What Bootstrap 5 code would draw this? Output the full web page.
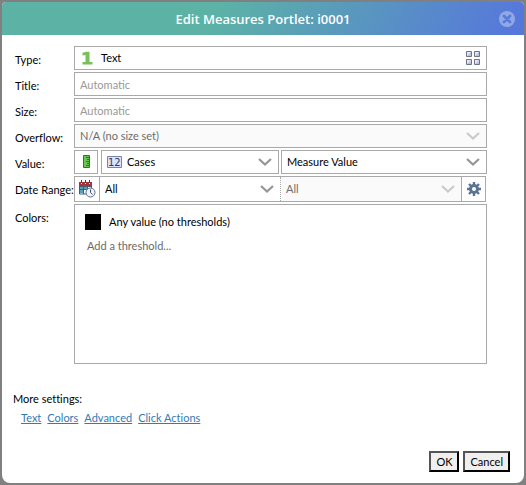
<!DOCTYPE html>
<html lang="en">
<head>
<meta charset="utf-8">
<meta name="viewport" content="width=device-width, initial-scale=1">
<title>Edit Measures Portlet: i0001</title>
<link href="https://cdn.jsdelivr.net/npm/bootstrap@5.3.0/dist/css/bootstrap.min.css" rel="stylesheet">
<style>
body{font-family:Lato,"Open Sans",sans-serif;font-size:11px;line-height:16px;color:#000;background:#808080;font-variant-ligatures:none}
.shell{padding:2px}
.dialog{background:#fff;border-radius:4px 4px 8px 8px;overflow:hidden}
.dialog-head{height:33px;background:linear-gradient(120deg,#5cb3a5 40%,#5678db 97%);color:#fff}
.dialog-head h1{font-family:"Open Sans",sans-serif;font-size:13px;line-height:20px;font-weight:600}
.close-btn{right:9px;top:9px;width:16px;height:16px}
.settings{padding:11px 37px 0 13px}
.setting{display:grid;grid-template-columns:59px minmax(0,1fr);margin-bottom:2px}
.setting>.caption{padding-top:6px;white-space:nowrap}
.field{height:24px;border:1px solid #a9a9a9;border-radius:0;background-color:#fff;font-size:11px;line-height:16px;color:#000;min-width:0}
.field.form-control{padding:0 5px}
.field::placeholder{color:#999}
.tall{height:26px}
.type-btn{padding:0 5px 0 7px}
.pick{border:0;border-radius:0;height:100%;min-width:0;padding:0 26px 0 5px;font-size:11px;line-height:16px;color:#000;background-color:#fff;background-size:14px 8px;background-position:right 6px center;
background-image:url("data:image/svg+xml,%3Csvg xmlns='http://www.w3.org/2000/svg' viewBox='0 0 14 8'%3E%3Cpath d='M1 1l6 5.500 6-5.500' fill='none' stroke='%23959595' stroke-width='2.200'/%3E%3C/svg%3E")}
.pick:disabled{color:#6d6d6d;background-color:#fafafa;opacity:1;
background-image:url("data:image/svg+xml,%3Csvg xmlns='http://www.w3.org/2000/svg' viewBox='0 0 14 8'%3E%3Cpath d='M1 1l6 5.500 6-5.500' fill='none' stroke='%23cacaca' stroke-width='2.200'/%3E%3C/svg%3E")}
.value-row{display:grid;grid-template-columns:25px minmax(0,178fr) minmax(0,206fr);column-gap:2px}
.value-kind{margin-right:1px}
.measure-box{padding-left:5px}
.measure-box .pick{padding-left:5px}
.range-row{display:grid;grid-template-columns:24px minmax(0,181fr) minmax(0,181fr) 24px;margin-right:1px}
.split{border-left:1px dotted #a9a9a9}
.rule-start{border-left:1px solid #a9a9a9}
.field .gear-btn{border:0;border-left:1px solid #a9a9a9;border-radius:0}
.thresholds{border:1px solid #a9a9a9;min-height:160px;padding:9px 10px}
.swatch{width:16px;height:16px;background:#000}
.hint{color:#6a6a6a;padding-left:2px}
.more{padding:25px 11px 0}
.links{margin-top:3px;column-gap:6px}
.more a{color:#337ab7}
.foot{padding:0 14px 11px}
.act{font-size:11px;line-height:15px;padding:1px 5px;border:2px outset #000;background:#efefef;color:#000}
</style>
</head>
<body>
<div class="shell min-vh-100 d-flex">
<main class="dialog d-flex flex-column flex-grow-1">
  <header class="dialog-head position-relative d-flex align-items-center justify-content-center">
    <h1 class="m-0">Edit Measures Portlet: i0001</h1>
    <button type="button" class="close-btn btn p-0 border-0 position-absolute d-flex" aria-label="Close">
      <svg width="16" height="16" viewBox="0 0 16 16"><circle cx="8" cy="8" r="8" fill="#91a7e6"/><path d="M5 5l6 6M11 5l-6 6" stroke="#567bd8" stroke-width="2.800" stroke-linecap="round"/></svg>
    </button>
  </header>

  <form class="d-flex flex-column flex-grow-1">
    <div class="settings">
      <div class="setting"><label class="caption" for="type">Type:</label>
        <button type="button" id="type" class="field type-btn d-flex align-items-center w-100 text-start">
          <svg width="11" height="14" viewBox="0 0 11 14"><path d="M3.500 11V4L.5 4.500V1.800L4.500 .8H7.500V11H10.500V13.500H.5V11Z" fill="#78c05a"/></svg>
          <span class="ms-2 flex-grow-1">Text</span>
          <svg width="16" height="16" viewBox="0 0 16 16"><path d="M1.500 1.500h5v5h-5zM9.500 1.500h5v5h-5zM1.500 9.500h5v5h-5zM9.500 9.500h5v5h-5z" fill="#bcc4e6" stroke="#6e7385"/><path d="M2 2h4L2 6zM10 2h4l-4 4zM2 10h4l-4 4zM10 10h4l-4 4z" fill="#e4e8f6"/></svg>
        </button>
      </div>
      <div class="setting"><label class="caption" for="title">Title:</label>
        <input id="title" class="field form-control" placeholder="Automatic"></div>
      <div class="setting"><label class="caption" for="size">Size:</label>
        <input id="size" class="field form-control" placeholder="Automatic"></div>
      <div class="setting"><label class="caption" for="overflow">Overflow:</label>
        <div class="field"><select id="overflow" class="form-select pick" disabled><option>N/A (no size set)</option></select></div></div>
      <div class="setting"><label class="caption" for="measure">Value:</label>
        <div class="value-row">
          <button type="button" class="field value-kind p-0 d-flex align-items-center justify-content-center" aria-label="Measure type">
            <svg width="8" height="14" viewBox="0 0 8 14"><path d="M1.500 .5h6v12h-6z" fill="#69c653" stroke="#34752c"/><path d="M4 2.500h3M5 4.500h2M4 6.500h3M5 8.500h2M4 10.500h3" stroke="#34752c"/></svg>
          </button>
          <div class="field measure-box d-flex align-items-center">
            <svg class="flex-shrink-0" width="15" height="12" viewBox="0 0 15 12"><path d="M.5 .5h14v11H.5z" fill="#dce2fb" stroke="#7783a8"/><text x="1" y="10" font-family="DejaVu Sans, sans-serif" font-size="10" fill="#343b50">12</text></svg>
            <select id="measure" class="form-select pick"><option>Cases</option></select>
          </div>
          <div class="field"><select class="form-select pick" aria-label="Value kind"><option>Measure Value</option></select></div>
        </div>
      </div>
      <div class="setting"><label class="caption" for="range">Date Range:</label>
        <div class="field tall range-row">
          <button type="button" class="btn p-0 border-0 d-flex align-items-center justify-content-center" aria-label="Calendar">
            <svg width="18" height="18" viewBox="0 0 18 18"><path d="M1.500 3h12v11h-12z" fill="#fff" stroke="#4b5970"/><path d="M1 2h13v4H1z" fill="#a9323f"/><path d="M3.500 0v4M7.500 0v4M11.500 0v4" stroke="#56323c"/><path d="M3 3.500h1M7 3.500h1M11 3.500h1" stroke="#fff"/><path d="M2 7h3v2H2zM6 7h3v2H6zM2 10h3v3H2z" fill="#5a9ebd"/><path d="M5.500 6v8M9.500 6v8M1 9.500h12M1 6.500h12" stroke="#4b5970"/><circle cx="12.500" cy="12.500" r="4.500" fill="#eef2fb" stroke="#606d86"/><path d="M12.500 9.500v3l2 2" fill="none" stroke="#3e4b60"/></svg>
          </button>
          <div class="rule-start"><select id="range" class="form-select pick"><option>All</option></select></div>
          <div class="split"><select class="form-select pick" aria-label="Date range detail" disabled><option>All</option></select></div>
          <button type="button" class="gear-btn btn p-0 d-flex align-items-center justify-content-center" aria-label="Date range settings">
            <svg width="14" height="14" viewBox="0 0 14 14"><path d="M7 0v14M0 7h14M2 2l10 10M12 2L2 12" stroke="#5a7491" stroke-width="2.400"/><circle cx="7" cy="7" r="3.500" fill="#fff" stroke="#5a7491" stroke-width="3"/></svg>
          </button>
        </div>
      </div>
      <div class="setting"><span class="caption">Colors:</span>
        <div class="thresholds">
          <div class="d-flex align-items-center gap-2"><span class="swatch"></span><span>Any value (no thresholds)</span></div>
          <div class="hint mt-2">Add a threshold...</div>
        </div>
      </div>
    </div>

    <nav class="more" aria-label="More settings">
      <div>More settings:</div>
      <div class="links d-flex ps-2"><a href="#">Text</a><a href="#">Colors</a><a href="#">Advanced</a><a href="#">Click Actions</a></div>
    </nav>

    <div class="foot d-flex justify-content-end gap-1 mt-auto">
      <button type="button" class="act">OK</button>
      <button type="button" class="act">Cancel</button>
    </div>
  </form>
</main>
</div>
<script src="https://cdn.jsdelivr.net/npm/bootstrap@5.3.0/dist/js/bootstrap.bundle.min.js"></script>
</body>
</html>
